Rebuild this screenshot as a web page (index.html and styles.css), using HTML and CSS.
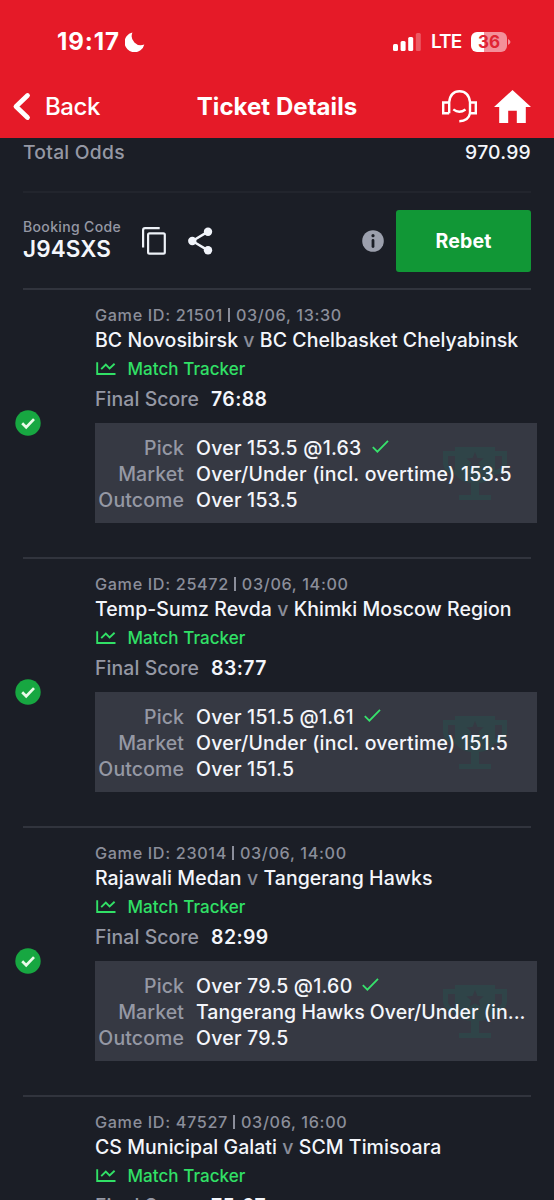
FILE: index.html
```html
<!DOCTYPE html>
<html lang="en">
<head>
<meta charset="utf-8">
<title>Ticket Details</title>
<link rel="stylesheet" href="styles.css">
</head>
<body>
<svg class="defs" width="0" height="0" aria-hidden="true">
  <symbol id="won" viewBox="0 0 26 26"><circle cx="13" cy="13" r="12.7" fill="#17a741"/><path d="M7.2 13.2l4 4L19 9.1" fill="none" stroke="#e9fbe9" stroke-width="2.7"/></symbol>
  <symbol id="chart" viewBox="0 0 20 14"><path d="M1.2.3v11.7h18.3M5.2 7.2l4.6-4.6 3.8 3.8 5-4.6" fill="none" stroke="#31e066" stroke-width="1.9"/></symbol>
  <symbol id="tick" viewBox="0 0 17 13"><path d="M.8 7.2l4.6 4.5L16 .9" fill="none" stroke="#37e26c" stroke-width="1.8"/></symbol>
  <symbol id="trophy" viewBox="0 0 64 53"><path d="M12 0h40v4h12v13q-1 10-13 11-4 7-15 8v12h12v5H16v-5h12V36q-11-1-15-8Q1 27 0 17V4h12zM5 9v8q1 5 7 6V9zm47 0v14q6-1 7-6V9zM32 5l-2.4 6-6.2.4 4.8 4-1.6 6.2 5.4-3.4 5.4 3.4-1.6-6.2 4.8-4-6.2-.4z" fill="#2f4448" fill-rule="evenodd"/></symbol>
</svg>
<main class="screen">
  <header class="header">
    <div class="status">
      <span class="time">19:17</span>
      <svg class="moon" width="20" height="20" viewBox="0 0 20 20"><path d="M7.4.5A10 10 0 1 0 19.3 12.5 9.2 9.2 0 0 1 7.4.5z" fill="#fff"/></svg>
      <div class="status-right">
        <svg width="28" height="18" viewBox="0 0 28 18" fill="#fff"><rect x="0" y="11" width="5" height="7" rx="1.5"/><rect x="7.6" y="8" width="5" height="10" rx="1.5"/><rect x="15.2" y="4" width="5" height="14" rx="1.5"/><rect x="22.8" y="0" width="5" height="18" rx="1.5" opacity=".28"/></svg>
        <span class="network">LTE</span>
        <span class="battery">36</span>
        <svg width="3" height="6" viewBox="0 0 3 6"><path d="M0 0q5 3 0 6z" fill="#f3909a"/></svg>
      </div>
    </div>
    <nav class="nav">
      <a class="back"><svg width="20" height="29" viewBox="0 0 20 29"><path d="M16.5 3.5L5 14.5 16.5 25.5" fill="none" stroke="#fff" stroke-width="4.8" stroke-linecap="round" stroke-linejoin="round"/></svg><span>Back</span></a>
      <h1 class="title">Ticket Details</h1>
      <div class="nav-icons">
        <svg width="35" height="33" viewBox="0 0 35 33" fill="none" stroke="#fff" stroke-width="2.4"><path d="M7.2 23.2V12Q8.5 1.3 17.5 1.3T28 12v11.2Q26.5 31 17.3 31.2M7.2 12.5H1.2v10.7h6M28 12.5h5.8v10.7H28M11.3 19.4q5.9 4.5 12.2 0"/></svg>
        <svg width="37" height="33" viewBox="0 0 37 33"><path d="M18.5 0L37 17h-5.2v16h-9V20.7h-8.6V33h-9V17H0z" fill="#fff"/></svg>
      </div>
    </nav>
  </header>
  <section class="odds"><span class="muted total">Total Odds</span><span class="odds-value">970.99</span></section>
  <section class="booking">
    <div class="code"><span class="code-label">Booking Code</span><strong class="code-value">J94SXS</strong></div>
    <svg class="copy" width="24" height="28" viewBox="0 0 24 28" fill="none" stroke="#edf1f7" stroke-width="2.2"><path d="M1.1 20.5V3q0-1.9 1.9-1.9h14.7"/><rect x="6.1" y="6.3" width="16.7" height="20.3" rx="1.4"/></svg>
    <svg class="share" width="25" height="28" viewBox="0 0 25 28" fill="#f1f4fa"><path d="M20 4.6L4.4 14 20 23.4" fill="none" stroke="#f1f4fa" stroke-width="2.4"/><circle cx="20" cy="4.8" r="4.2"/><circle cx="4.3" cy="14" r="4.2"/><circle cx="20" cy="23.2" r="4.2"/></svg>
    <svg class="info" width="22" height="22" viewBox="0 0 22 22"><circle cx="11" cy="11" r="10.8" fill="#9ca0ad"/><circle cx="11" cy="5.7" r="1.6" fill="#1b1e26"/><path d="M11 10.4v6.2" stroke="#1b1e26" stroke-width="2.8" stroke-linecap="round"/></svg>
    <button class="rebet">Rebet</button>
  </section>

  <article class="game">
    <svg class="won"><use href="#won"/></svg>
    <div class="details">
      <p class="meta">Game ID: 21501 <i class="bar"></i> 03/06, 13:30</p>
      <h2 class="teams">BC Novosibirsk <span>v</span> BC Chelbasket Chelyabinsk</h2>
      <a class="tracker"><svg class="chart"><use href="#chart"/></svg>Match Tracker</a>
      <p class="score"><span class="muted">Final Score</span><b>76:88</b></p>
      <dl class="bet">
        <svg class="trophy"><use href="#trophy"/></svg>
        <dt>Pick</dt><dd>Over 153.5 @1.63<svg class="tick"><use href="#tick"/></svg></dd>
        <dt>Market</dt><dd>Over/Under (incl. overtime) 153.5</dd>
        <dt>Outcome</dt><dd>Over 153.5</dd>
      </dl>
    </div>
  </article>
  <article class="game">
    <svg class="won"><use href="#won"/></svg>
    <div class="details">
      <p class="meta">Game ID: 25472 <i class="bar"></i> 03/06, 14:00</p>
      <h2 class="teams">Temp-Sumz Revda <span>v</span> Khimki Moscow Region</h2>
      <a class="tracker"><svg class="chart"><use href="#chart"/></svg>Match Tracker</a>
      <p class="score"><span class="muted">Final Score</span><b>83:77</b></p>
      <dl class="bet">
        <svg class="trophy"><use href="#trophy"/></svg>
        <dt>Pick</dt><dd>Over 151.5 @1.61<svg class="tick"><use href="#tick"/></svg></dd>
        <dt>Market</dt><dd>Over/Under (incl. overtime) 151.5</dd>
        <dt>Outcome</dt><dd>Over 151.5</dd>
      </dl>
    </div>
  </article>
  <article class="game">
    <svg class="won"><use href="#won"/></svg>
    <div class="details">
      <p class="meta">Game ID: 23014 <i class="bar"></i> 03/06, 14:00</p>
      <h2 class="teams">Rajawali Medan <span>v</span> Tangerang Hawks</h2>
      <a class="tracker"><svg class="chart"><use href="#chart"/></svg>Match Tracker</a>
      <p class="score"><span class="muted">Final Score</span><b>82:99</b></p>
      <dl class="bet">
        <svg class="trophy"><use href="#trophy"/></svg>
        <dt>Pick</dt><dd>Over 79.5 @1.60<svg class="tick"><use href="#tick"/></svg></dd>
        <dt>Market</dt><dd class="long">Tangerang Hawks Over/Under (in...</dd>
        <dt>Outcome</dt><dd>Over 79.5</dd>
      </dl>
    </div>
  </article>
  <article class="game">
    <div class="details">
      <p class="meta">Game ID: 47527 <i class="bar"></i> 03/06, 16:00</p>
      <h2 class="teams">CS Municipal Galati <span>v</span> SCM Timisoara</h2>
      <a class="tracker"><svg class="chart"><use href="#chart"/></svg>Match Tracker</a>
      <p class="score"><span class="muted">Final Score</span><b>75:67</b></p>
    </div>
  </article>
</main>
</body>
</html>
```
FILE: styles.css
```css
* { box-sizing: border-box; margin: 0; padding: 0; }
html, body { height: 1200px; overflow: hidden; background: #1b1e26; }
body { font-family: Inter, "Liberation Sans", sans-serif; color: #f4f6fb; }
svg { display: block; flex: none; }
.defs { position: absolute; }
.screen { width: 554px; height: 1200px; overflow: hidden; }
.muted { color: #9598a4; }

.header { height: 138px; background: #e51a28; color: #fff; }
.status { height: 76px; padding: 7px 43px 0 57px; display: flex; align-items: center; }
.time { width: 62px; font-size: 24px; font-weight: 700; letter-spacing: 0.9px; white-space: nowrap; }
.moon { margin-left: 6px; }
.status-right { margin-left: auto; display: flex; align-items: center; }
.network { margin-left: 10px; width: 30px; font-size: 19px; font-weight: 600; letter-spacing: -0.9px; }
.battery { margin-left: 10px; width: 36px; height: 20px; border-radius: 6px; background: linear-gradient(90deg, #fff 37%, #f3909a 37%); color: #e02433; font-size: 17px; font-weight: 700; line-height: 20px; text-align: center; }
.battery + svg { margin-left: 1px; }
.nav { height: 60px; padding: 0 23px 0 11px; display: grid; grid-template-columns: 150px 1fr 150px; align-items: center; }
.back { display: flex; align-items: center; gap: 14px; font-size: 24px; font-weight: 500; letter-spacing: -0.4px; }
.title { font-size: 24px; font-weight: 700; text-align: center; letter-spacing: 0.05px; padding-left: 12px; white-space: nowrap; margin: 0 -20px; }
.nav-icons { display: flex; justify-content: flex-end; gap: 17px; }

.odds { margin: 0 23px; height: 55px; border-bottom: 2px solid #22252d; display: flex; justify-content: space-between; font-size: 19.3px; font-weight: 500; line-height: 29px; letter-spacing: 0.25px; }
.booking { margin: 0 23px; height: 95px; display: flex; align-items: center; }
.code { width: 119px; display: flex; flex-direction: column; padding-bottom: 2px; }
.code-label { font-size: 14px; line-height: 18px; font-weight: 500; color: #9598a4; letter-spacing: 0.35px; }
.code-value { font-size: 22.5px; line-height: 25px; font-weight: 600; letter-spacing: 0.1px; }
.share { margin-left: 22px; }
.info { margin-left: auto; }
.rebet { margin-left: 12px; width: 135px; height: 62px; border: 0; border-radius: 3px; background: #119736; color: #fff; font: 700 19.5px/62px Inter, sans-serif; letter-spacing: 0.15px; }

.game { margin: 0 17px 0 23px; height: 269px; display: flex; align-items: center; background: linear-gradient(#31343d, #31343d) 0 0 / 508px 2px no-repeat; }
.won { width: 26px; height: 26px; margin-left: -8px; }
.details { flex: 1; height: 269px; padding-top: 15px; margin-left: 54px; }
.game > .details:first-child { margin-left: 72px; }
.meta { height: 24px; line-height: 24px; font-size: 16.2px; font-weight: 500; color: #8b8e9a; letter-spacing: 0.66px; white-space: nowrap; }
.bar { display: inline-block; width: 1.5px; height: 14px; margin: 0 1px 0 0.5px; background: #8b8e9a; vertical-align: -1px; }
.teams { height: 26px; line-height: 26px; font-size: 19.5px; font-weight: 500; letter-spacing: 0.05px; white-space: nowrap; }
.teams span { color: #8b8e9a; }
.tracker { height: 32px; display: flex; align-items: center; gap: 11.5px; font-size: 17px; font-weight: 500; color: #31e066; letter-spacing: 0.06px; }
.chart { width: 20px; height: 14px; margin-left: 1px; }
.score { height: 28px; line-height: 28px; font-size: 19.4px; font-weight: 500; display: flex; gap: 12px; letter-spacing: 0.1px; }
.score b { font-weight: 600; letter-spacing: 0.4px; }
.bet { position: relative; margin-top: 10px; height: 100px; padding-top: 12px; background: #363943; display: grid; grid-template-columns: 89px 1fr; grid-auto-rows: 26px; column-gap: 12px; line-height: 27px; font-size: 19.5px; font-weight: 500; letter-spacing: 0.22px; white-space: nowrap; }
.bet dt { color: #9598a4; text-align: right; position: relative; letter-spacing: 0.1px; }
.bet dd { display: flex; align-items: center; position: relative; }
.bet .long { letter-spacing: 0.02px; }
.trophy { position: absolute; width: 64px; height: 53px; left: 348px; top: 24px; }
.tick { width: 17px; height: 13px; margin: -4px 0 0 10px; }
```
